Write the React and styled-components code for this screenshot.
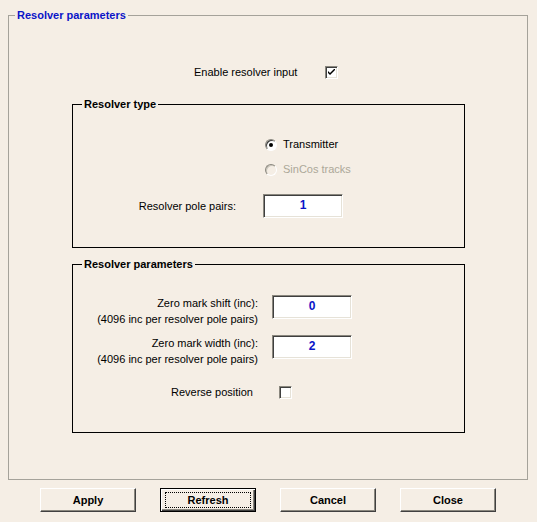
import React from 'react';
import styled, { createGlobalStyle } from 'styled-components';

const Global = createGlobalStyle`
    html, body {
        margin: 0;
        padding: 0;
        background: #f5eee5;
    }
    body {
        font-family: "Liberation Sans", Arial, sans-serif;
        font-size: 11px;
        color: #000;
    }
`

const Dialog = styled.div`
    width: 537px;
    height: 522px;
    box-sizing: border-box;
    padding-top: 9px;
    background: #f5eee5;
    display: flex;
    flex-direction: column;
`

const OuterGroup = styled.fieldset`
    margin: 0 9px 0 8px;
    padding: 0;
    height: 471px;
    box-sizing: border-box;
    border: 1px solid #a5a29a;
    min-width: 0;
`

const OuterTitle = styled.legend`
    margin-left: 6px;
    padding: 0 2px;
    line-height: 13px;
    font-weight: bold;
    color: #0a14c8;
`

const OuterBody = styled.div`
    padding: 0 62px 0 63px;
`

const Group = styled.fieldset`
    margin: ${p => p.top}px 0 0 0;
    padding: 0;
    height: ${p => p.h}px;
    box-sizing: border-box;
    border: 1px solid #000;
    min-width: 0;
`

const GroupTitle = styled.legend`
    margin-left: 9px;
    padding: 0 2px;
    line-height: 13px;
    font-weight: bold;
`

const Row = styled.div`
    display: flex;
    align-items: ${p => p.align || 'center'};
    margin-top: ${p => p.top || 0}px;
    padding-left: ${p => p.left || 0}px;
    gap: ${p => p.gap || 0}px;
`

const Label = styled.span`
    line-height: 13px;
    white-space: nowrap;
    color: ${p => p.disabled ? '#aca899' : '#000'};
`

const RightLabel = styled.div`
    width: ${p => p.w}px;
    text-align: right;
    line-height: 16px;
    white-space: nowrap;
    flex-shrink: 0;
`

const CheckBox = styled.span`
    width: 13px;
    height: 13px;
    box-sizing: border-box;
    background: #fff;
    border-top: 1px solid #8a877e;
    border-left: 1px solid #8a877e;
    border-right: 1px solid #fff;
    border-bottom: 1px solid #fff;
    box-shadow: inset 1px 1px 0 #3f3f3f, inset -1px -1px 0 #e6e2d8;
    display: flex;
    align-items: center;
    justify-content: center;
    flex-shrink: 0;
`

const Radio = styled.span`
    width: 12px;
    height: 12px;
    box-sizing: border-box;
    border-radius: 50%;
    background: ${p => p.disabled ? '#f5eee5' : '#fff'};
    border: 1px solid;
    border-color: #8a877e #fff #fff #8a877e;
    box-shadow: inset 1px 1px 0 ${p => p.disabled ? '#c9c5bb' : '#3f3f3f'};
    display: flex;
    align-items: center;
    justify-content: center;
    flex-shrink: 0;

    &::after {
        content: "";
        width: 4px;
        height: 4px;
        border-radius: 50%;
        background: #000;
        display: ${p => p.checked ? 'block' : 'none'};
    }
`

const ValueBox = styled.div`
    width: 80px;
    height: ${p => p.h || 24}px;
    box-sizing: border-box;
    background: #fff;
    border-top: 1px solid #8a877e;
    border-left: 1px solid #8a877e;
    border-right: 1px solid #fff;
    border-bottom: 1px solid #fff;
    box-shadow: inset 1px 1px 0 #3f3f3f, inset -1px -1px 0 #e6e2d8;
    color: #0a14c8;
    font-weight: bold;
    font-size: 12px;
    text-align: center;
    padding-top: 3px;
    flex-shrink: 0;
`

const ButtonBar = styled.div`
    display: flex;
    gap: 24px;
    padding-left: 40px;
    margin-top: 8px;
`

const Button = styled.button`
    width: 96px;
    height: 24px;
    box-sizing: border-box;
    background: #f5eee5;
    font-family: inherit;
    font-size: 11px;
    font-weight: bold;
    color: #000;
    padding: 0;
    border: 1px solid;
    border-color: ${p => p.focus ? '#000' : '#fff #404040 #404040 #fff'};
    box-shadow: ${p => p.focus
        ? 'inset 1px 1px 0 #fff, inset -1px -1px 0 #404040, inset -2px -2px 0 #8a877e'
        : 'inset -1px -1px 0 #8a877e'};
    display: flex;
    align-items: center;
    justify-content: center;
`

const FocusRing = styled.span`
    width: 84px;
    height: 14px;
    border: 1px dotted #000;
    display: flex;
    align-items: center;
    justify-content: center;
`

const Check = () => (
    <svg width="7" height="7" viewBox="0 0 7 7">
        <path d="M0 2 L0 4 L2 6 L7 1 L7 -1 L2 4 Z" fill="#000" />
    </svg>
)

const App = () => (
    <Dialog>
        <Global />
        <OuterGroup>
            <OuterTitle>Resolver parameters</OuterTitle>
            <OuterBody>
                <Row top={44} left={122} gap={28}>
                    <Label>Enable resolver input</Label>
                    <CheckBox><Check /></CheckBox>
                </Row>

                <Group top={19} h={150}>
                    <GroupTitle>Resolver type</GroupTitle>
                    <Row top={27} left={192} gap={6}>
                        <Radio checked />
                        <Label>Transmitter</Label>
                    </Row>
                    <Row top={12} left={192} gap={6}>
                        <Radio disabled />
                        <Label disabled>SinCos tracks</Label>
                    </Row>
                    <Row top={18} gap={27}>
                        <RightLabel w={163}>Resolver pole pairs:</RightLabel>
                        <ValueBox h={24}>1</ValueBox>
                    </Row>
                </Group>

                <Group top={10} h={175}>
                    <GroupTitle>Resolver parameters</GroupTitle>
                    <Row top={24} gap={14} align="flex-start">
                        <RightLabel w={185}>Zero mark shift (inc):<br />(4096 inc per resolver pole pairs)</RightLabel>
                        <ValueBox h={24}>0</ValueBox>
                    </Row>
                    <Row top={8} gap={14} align="flex-start">
                        <RightLabel w={185}>Zero mark width (inc):<br />(4096 inc per resolver pole pairs)</RightLabel>
                        <ValueBox h={24}>2</ValueBox>
                    </Row>
                    <Row top={19} left={98} gap={26}>
                        <Label>Reverse position</Label>
                        <CheckBox />
                    </Row>
                </Group>
            </OuterBody>
        </OuterGroup>

        <ButtonBar>
            <Button>Apply</Button>
            <Button focus><FocusRing>Refresh</FocusRing></Button>
            <Button>Cancel</Button>
            <Button>Close</Button>
        </ButtonBar>
    </Dialog>
);

export default App;
